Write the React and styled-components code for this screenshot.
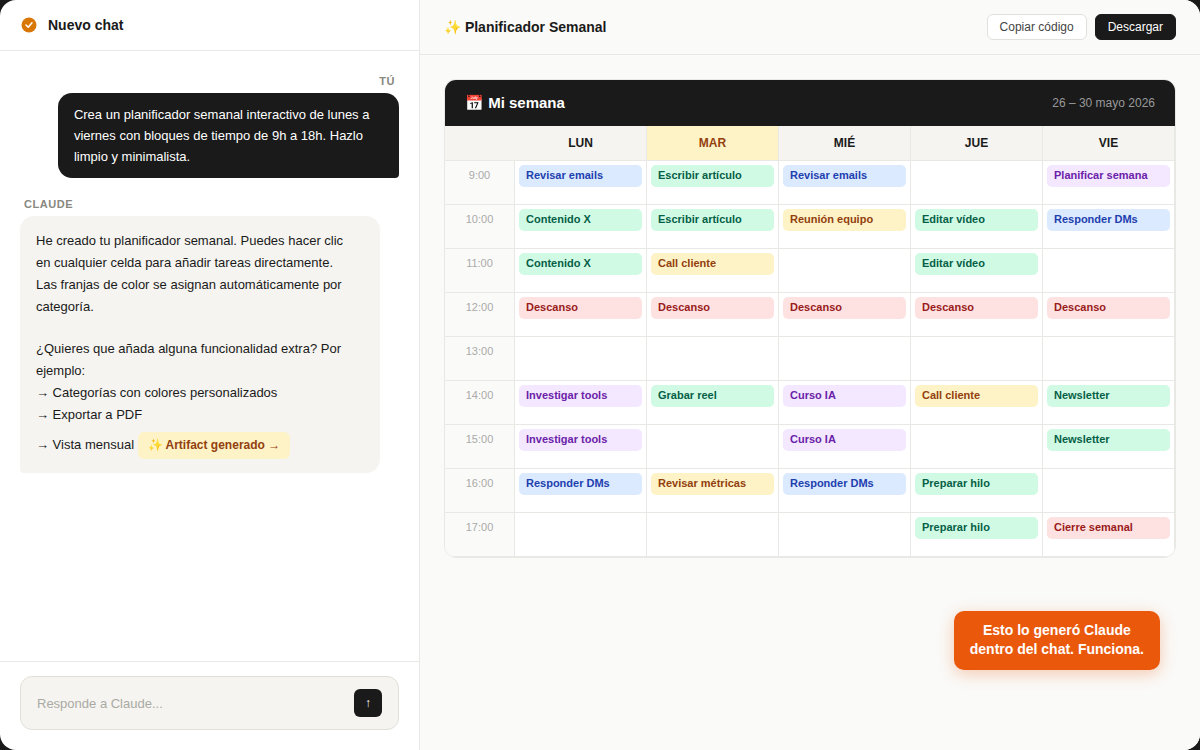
import React, { useState } from 'react';
import styled, { createGlobalStyle } from 'styled-components';

const GlobalStyle = createGlobalStyle`
  * {
    box-sizing: border-box;
  }
  body {
    margin: 0;
    background: #1a1a1a;
    color: #1a1a1a;
    font-family: 'Liberation Sans', Arial, sans-serif;
  }
  button, input {
    font-family: inherit;
  }
`;

const Window = styled.div`
  position: relative;
  display: flex;
  min-height: 100vh;
  border-radius: 16px;
  overflow: hidden;
  background: #fff;
`;

const ChatPanel = styled.section`
  flex: 0 0 35%;
  display: flex;
  flex-direction: column;
  border-right: 1px solid #e8e8e4;
`;

const ChatHeader = styled.header`
  display: flex;
  align-items: center;
  gap: 10px;
  padding: 16px 20px;
  border-bottom: 1px solid #e8e8e4;
`;

const ChatTitle = styled.h1`
  margin: 0;
  font-size: 14px;
  line-height: 18px;
`;

const Messages = styled.div`
  flex: 1;
  display: flex;
  flex-direction: column;
  gap: 20px;
  padding: 24px 20px;
`;

const Message = styled.div`
  display: flex;
  flex-direction: column;
  align-items: ${(props) => (props.$mine ? 'flex-end' : 'flex-start')};
`;

const Sender = styled.span`
  margin-bottom: 5px;
  padding: 0 4px;
  font-size: 11px;
  font-weight: 700;
  line-height: 13px;
  letter-spacing: 0.05em;
  text-transform: uppercase;
  color: #888880;
`;

const UserBubble = styled.div`
  max-width: 90%;
  padding: 11px 16px;
  border-radius: 14px 14px 4px 14px;
  background: #1a1a1a;
  color: #fff;
  font-size: 13px;
  line-height: 21px;
`;

const ClaudeBubble = styled.div`
  max-width: 95%;
  padding: 14px 24px 14px 16px;
  border-radius: 14px 14px 14px 4px;
  background: #f5f4f0;
  font-size: 13px;
  line-height: 22px;

  p {
    margin: 0 0 20px;
  }
`;

const Suggestions = styled.div`
  display: flex;
  flex-direction: column;
`;

const ArtifactButton = styled.button`
  margin: 6px 0 0;
  padding: 6px 10px;
  border: none;
  border-radius: 6px;
  background: #fef3c7;
  color: #92400e;
  font-size: 12px;
  font-weight: 700;
  line-height: 15px;
  cursor: pointer;
`;

const Composer = styled.form`
  padding: 14px 20px 20px;
  border-top: 1px solid #e8e8e4;
`;

const ComposerBox = styled.div`
  display: flex;
  align-items: center;
  gap: 10px;
  padding: 12px 16px;
  border: 1px solid #e0dfd8;
  border-radius: 12px;
  background: #f5f4f0;
`;

const ComposerInput = styled.input`
  flex: 1;
  min-width: 0;
  padding: 0;
  border: none;
  outline: none;
  background: transparent;
  color: #1a1a1a;
  font-size: 13px;

  &::placeholder {
    color: #aaaaa4;
  }
`;

const SendButton = styled.button`
  width: 28px;
  height: 28px;
  padding: 0;
  border: none;
  border-radius: 6px;
  background: #1a1a1a;
  color: #fff;
  font-size: 12px;
  cursor: pointer;
`;

const ArtifactPanel = styled.main`
  flex: 1;
  min-width: 0;
  display: flex;
  flex-direction: column;
  background: #fafaf8;
`;

const ArtifactHeader = styled.header`
  display: flex;
  align-items: center;
  justify-content: space-between;
  padding: 14px 24px;
  border-bottom: 1px solid #e8e8e4;
`;

const ArtifactTitle = styled.h2`
  margin: 0;
  font-size: 14px;
  line-height: 18px;
`;

const Actions = styled.div`
  display: flex;
  gap: 8px;
`;

const ActionButton = styled.button`
  padding: 5px 12px;
  border: 1px solid ${(props) => (props.$primary ? '#1a1a1a' : '#e0e0dc')};
  border-radius: 6px;
  background: ${(props) => (props.$primary ? '#1a1a1a' : '#fff')};
  color: ${(props) => (props.$primary ? '#fff' : '#444')};
  font-size: 12px;
  line-height: 14px;
  cursor: pointer;
`;

const ArtifactBody = styled.div`
  padding: 24px;
`;

const Card = styled.div`
  border: 1px solid #e8e8e4;
  border-radius: 12px;
  overflow: hidden;
  background: #fff;
`;

const CardHeader = styled.div`
  display: flex;
  align-items: center;
  justify-content: space-between;
  padding: 14px 20px;
  background: #1a1a1a;
`;

const CardTitle = styled.h3`
  margin: 0;
  font-size: 15px;
  line-height: 18px;
  color: #fff;
`;

const WeekRange = styled.span`
  font-size: 12px;
  color: #999;
`;

const Planner = styled.table`
  width: 100%;
  table-layout: fixed;
  border-collapse: separate;
  border-spacing: 0;
`;

const CornerCell = styled.td`
  width: 70px;
  padding: 0;
  border-bottom: 1px solid #e8e8e4;
  background: #f5f4f0;
`;

const DayCell = styled.th`
  padding: 10px 0;
  border-right: 1px solid #e8e8e4;
  border-bottom: 1px solid #e8e8e4;
  background: ${(props) => (props.$today ? '#fef3c7' : '#f5f4f0')};
  color: ${(props) => (props.$today ? '#92400e' : '#1a1a1a')};
  font-size: 12px;
  line-height: 14px;
`;

const HourCell = styled.th`
  padding: 8px 0;
  border-right: 1px solid #e8e8e4;
  border-bottom: 1px solid #e8e8e4;
  background: #fafaf8;
  color: #aaa;
  font-size: 11px;
  font-weight: 400;
  line-height: 13px;
  vertical-align: top;
`;

const SlotCell = styled.td`
  height: 44px;
  padding: 4px;
  border-right: 1px solid #e8e8e4;
  border-bottom: 1px solid #e8e8e4;
  vertical-align: top;
`;

const taskColors = {
  blue: { background: '#dbeafe', text: '#1e40af' },
  green: { background: '#d1fae5', text: '#065f46' },
  yellow: { background: '#fef3c7', text: '#92400e' },
  red: { background: '#fee2e2', text: '#991b1b' },
  purple: { background: '#f3e8ff', text: '#6b21a8' },
};

const Task = styled.div`
  padding: 3px 7px 5px;
  border-radius: 5px;
  background: ${(props) => taskColors[props.$color].background};
  color: ${(props) => taskColors[props.$color].text};
  font-size: 11px;
  font-weight: 700;
  line-height: 14px;
`;

const Callout = styled.div`
  position: absolute;
  right: 40px;
  bottom: 80px;
  padding: 10px 16px 11px;
  border-radius: 10px;
  background: #ea580c;
  box-shadow: 0 4px 16px rgba(234, 88, 12, 0.3);
  color: #fff;
  font-size: 14px;
  font-weight: 700;
  line-height: 19px;
  text-align: center;
`;

const days = ['LUN', 'MAR', 'MIÉ', 'JUE', 'VIE'];
const today = 'MAR';

const categories = {
  'Revisar emails': 'blue',
  'Responder DMs': 'blue',
  'Escribir artículo': 'green',
  'Contenido X': 'green',
  'Editar vídeo': 'green',
  'Grabar reel': 'green',
  'Newsletter': 'green',
  'Preparar hilo': 'green',
  'Reunión equipo': 'yellow',
  'Call cliente': 'yellow',
  'Revisar métricas': 'yellow',
  'Descanso': 'red',
  'Cierre semanal': 'red',
  'Planificar semana': 'purple',
  'Investigar tools': 'purple',
  'Curso IA': 'purple',
};

const schedule = [
  { hour: '9:00', tasks: ['Revisar emails', 'Escribir artículo', 'Revisar emails', '', 'Planificar semana'] },
  { hour: '10:00', tasks: ['Contenido X', 'Escribir artículo', 'Reunión equipo', 'Editar vídeo', 'Responder DMs'] },
  { hour: '11:00', tasks: ['Contenido X', 'Call cliente', '', 'Editar vídeo', ''] },
  { hour: '12:00', tasks: ['Descanso', 'Descanso', 'Descanso', 'Descanso', 'Descanso'] },
  { hour: '13:00', tasks: ['', '', '', '', ''] },
  { hour: '14:00', tasks: ['Investigar tools', 'Grabar reel', 'Curso IA', 'Call cliente', 'Newsletter'] },
  { hour: '15:00', tasks: ['Investigar tools', '', 'Curso IA', '', 'Newsletter'] },
  { hour: '16:00', tasks: ['Responder DMs', 'Revisar métricas', 'Responder DMs', 'Preparar hilo', ''] },
  { hour: '17:00', tasks: ['', '', '', 'Preparar hilo', 'Cierre semanal'] },
];

const CheckIcon = () => (
  <svg width="18" height="18" viewBox="0 0 24 24" fill="none" aria-hidden="true">
    <circle cx="12" cy="12" r="10" fill="#d97706" />
    <path d="M8 12l3 3 5-6" stroke="#fff" strokeWidth="2" strokeLinecap="round" strokeLinejoin="round" />
  </svg>
);

const Chat = () => {
  const [reply, setReply] = useState('');

  const handleSubmit = (e) => {
    e.preventDefault();
    setReply('');
  };

  return (
    <ChatPanel>
      <ChatHeader>
        <CheckIcon />
        <ChatTitle>Nuevo chat</ChatTitle>
      </ChatHeader>
      <Messages>
        <Message $mine>
          <Sender>Tú</Sender>
          <UserBubble>
            Crea un planificador semanal interactivo de lunes a viernes con bloques de tiempo de 9h a 18h. Hazlo limpio y minimalista.
          </UserBubble>
        </Message>
        <Message>
          <Sender>Claude</Sender>
          <ClaudeBubble>
            <p>
              He creado tu planificador semanal. Puedes hacer clic en cualquier celda para añadir tareas directamente. Las franjas de color se asignan automáticamente por categoría.
            </p>
            <Suggestions>
              <span>¿Quieres que añada alguna funcionalidad extra? Por ejemplo:</span>
              <span>→ Categorías con colores personalizados</span>
              <span>→ Exportar a PDF</span>
              <span>
                → Vista mensual <ArtifactButton type="button">✨ Artifact generado →</ArtifactButton>
              </span>
            </Suggestions>
          </ClaudeBubble>
        </Message>
      </Messages>
      <Composer onSubmit={handleSubmit}>
        <ComposerBox>
          <ComposerInput
            type="text"
            aria-label="Responde a Claude"
            placeholder="Responde a Claude..."
            value={reply}
            onChange={(e) => setReply(e.target.value)}
          />
          <SendButton type="submit" aria-label="Enviar">↑</SendButton>
        </ComposerBox>
      </Composer>
    </ChatPanel>
  );
};

const WeekPlanner = () => (
  <Card>
    <CardHeader>
      <CardTitle>📅 Mi semana</CardTitle>
      <WeekRange>26 – 30 mayo 2026</WeekRange>
    </CardHeader>
    <Planner>
      <thead>
        <tr>
          <CornerCell />
          {days.map((day) => (
            <DayCell key={day} scope="col" $today={day === today}>{day}</DayCell>
          ))}
        </tr>
      </thead>
      <tbody>
        {schedule.map(({ hour, tasks }) => (
          <tr key={hour}>
            <HourCell scope="row">{hour}</HourCell>
            {tasks.map((task, i) => (
              <SlotCell key={days[i]}>
                {task && <Task $color={categories[task]}>{task}</Task>}
              </SlotCell>
            ))}
          </tr>
        ))}
      </tbody>
    </Planner>
  </Card>
);

const App = () => (
  <>
    <GlobalStyle />
    <Window>
      <Chat />
      <ArtifactPanel>
        <ArtifactHeader>
          <ArtifactTitle>✨ Planificador Semanal</ArtifactTitle>
          <Actions>
            <ActionButton type="button">Copiar código</ActionButton>
            <ActionButton type="button" $primary>Descargar</ActionButton>
          </Actions>
        </ArtifactHeader>
        <ArtifactBody>
          <WeekPlanner />
        </ArtifactBody>
      </ArtifactPanel>
      <Callout>
        Esto lo generó Claude
        <br />
        dentro del chat. Funciona.
      </Callout>
    </Window>
  </>
);

export default App;
